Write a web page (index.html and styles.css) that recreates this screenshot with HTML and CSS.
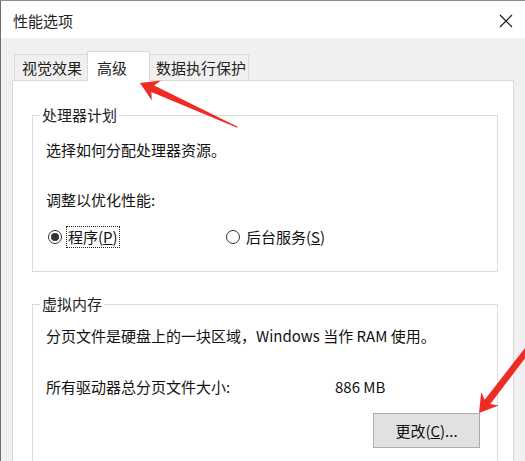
FILE: index.html
```html
<!DOCTYPE html>
<html lang="zh-CN">
<head>
<meta charset="utf-8">
<title>性能选项</title>
<link rel="stylesheet" href="styles.css">
</head>
<body>
<div class="window">
  <div class="titlebar">
    <span class="title">性能选项</span>
    <svg class="close" width="14" height="14" viewBox="0 0 14 14"><path d="M1 1 L13 13 M13 1 L1 13" stroke="#111" stroke-width="1.1" fill="none"/></svg>
  </div>
  <div class="body">
    <div class="tabs">
      <div class="tab t1">视觉效果</div>
      <div class="tab active t2">高级</div>
      <div class="tab t3">数据执行保护</div>
    </div>
    <div class="panel">
      <fieldset class="group g1">
        <legend>处理器计划</legend>
        <div class="inner inner1">
          <p class="line">选择如何分配处理器资源。</p>
          <p class="line l2">调整以优化性能:</p>
          <div class="radios">
            <div class="radio"><span class="dot checked"></span><span class="lbl focus">程序(<u>P</u>)</span></div>
            <div class="radio"><span class="dot"></span><span class="lbl">后台服务(<u>S</u>)</span></div>
          </div>
        </div>
      </fieldset>
      <fieldset class="group g2">
        <legend>虚拟内存</legend>
        <div class="inner inner2">
          <p class="line">分页文件是硬盘上的一块区域，Windows 当作 RAM 使用。</p>
          <div class="sizerow"><span>所有驱动器总分页文件大小:</span><span>886 MB</span></div>
          <div class="btnrow"><button class="btn">更改(<u>C</u>)...</button></div>
        </div>
      </fieldset>
    </div>
  </div>
  <svg class="arrows" width="525" height="461" viewBox="0 0 525 461">
    <polygon transform="translate(140,83) rotate(24.4)" points="0,0 18,-11 14,-3.5 107,-0.6 107,0.6 14,3.5 18,11" fill="#ee2b24"/>
    <polygon transform="translate(479,413) rotate(-52.5)" points="0,0 18,-11 14,-3.5 95,-3 95,3 14,3.5 18,11" fill="#ee2b24"/>
  </svg>
</div>
</body>
</html>
```
FILE: styles.css
```css
* { box-sizing: border-box; }
html, body { margin: 0; padding: 0; }
body {
  font-family: "Noto Sans CJK SC", "Noto Sans", sans-serif;
  font-size: 15px;
  line-height: 20px;
  color: #111;
  background: #f0f0f0;
}
.window {
  position: relative;
  width: 525px;
  height: 461px;
  overflow: hidden;
  background: #f0f0f0;
  border-top: 1px solid #8c8c8c;
  border-left: 1px solid #6e6e6e;
}
.titlebar {
  height: 37px;
  background: #fff;
  display: flex;
  align-items: center;
  padding-left: 12px;
  padding-top: 2px;
}
.title { color: #222; }
.close { margin-left: auto; margin-right: 12px; }
.body { padding-left: 11px; }
.tabs {
  display: flex;
  align-items: flex-end;
  padding-top: 13px;
  height: 42px;
}
.tab {
  height: 26px;
  line-height: 26px;
  background: #f0f0f0;
  border: 1px solid #d9d9d9;
  border-bottom: none;
  white-space: nowrap;
  color: #222;
}
.t1 { margin-left: 2px; width: 73px; padding-left: 7px; border-right: none; }
.t2 {
  position: relative;
  z-index: 2;
  width: 63px;
  height: 30px;
  margin-bottom: -1px;
  padding-left: 9px;
  padding-top: 3px;
  background: #fff;
}
.t3 { width: 99px; padding-left: 6px; border-left: none; }
.panel {
  width: 502px;
  height: 400px;
  background: #fff;
  border: 1px solid #d9d9d9;
}
.group {
  width: 466px;
  margin: 0 0 0 19px;
  padding: 0;
  border: 1px solid #dcdcdc;
  min-width: 0;
}
.g1 { margin-top: 24px; }
.g2 { margin-top: 22px; }
.group legend {
  margin-left: 7px;
  padding: 0 2px;
  line-height: 20px;
  color: #222;
}
.inner1 { padding: 15px 0 22px 13px; }
.inner2 { padding: 12px 0 20px 13px; }
.line { margin: 0; white-space: nowrap; }
.l2 { margin-top: 30px; }
.radios {
  margin-top: 15px;
  height: 24px;
  display: grid;
  grid-template-columns: 178px auto;
  align-items: center;
}
.radio { display: flex; align-items: center; }
.dot {
  width: 14px;
  height: 14px;
  margin-left: 2px;
  margin-right: 4px;
  border: 1px solid #333;
  border-radius: 50%;
  display: flex;
  align-items: center;
  justify-content: center;
  background: #fff;
}
.dot.checked::after {
  content: "";
  width: 8px;
  height: 8px;
  border-radius: 50%;
  background: #333;
}
.lbl {
  border: 1px solid transparent;
  padding: 0 1px;
  line-height: 20px;
  white-space: nowrap;
}
.lbl.focus { border: 1px dotted #222; }
.sizerow {
  margin-top: 31px;
  display: grid;
  grid-template-columns: 289px auto;
  white-space: nowrap;
}
.btnrow {
  margin-top: 16px;
  display: flex;
  justify-content: flex-end;
  padding-right: 17px;
}
.btn {
  width: 107px;
  height: 35px;
  background: #e1e1e1;
  border: 1px solid #adadad;
  font: inherit;
  color: #111;
  padding: 0;
}
.arrows {
  position: absolute;
  top: -1px;
  left: -1px;
  pointer-events: none;
}
```
